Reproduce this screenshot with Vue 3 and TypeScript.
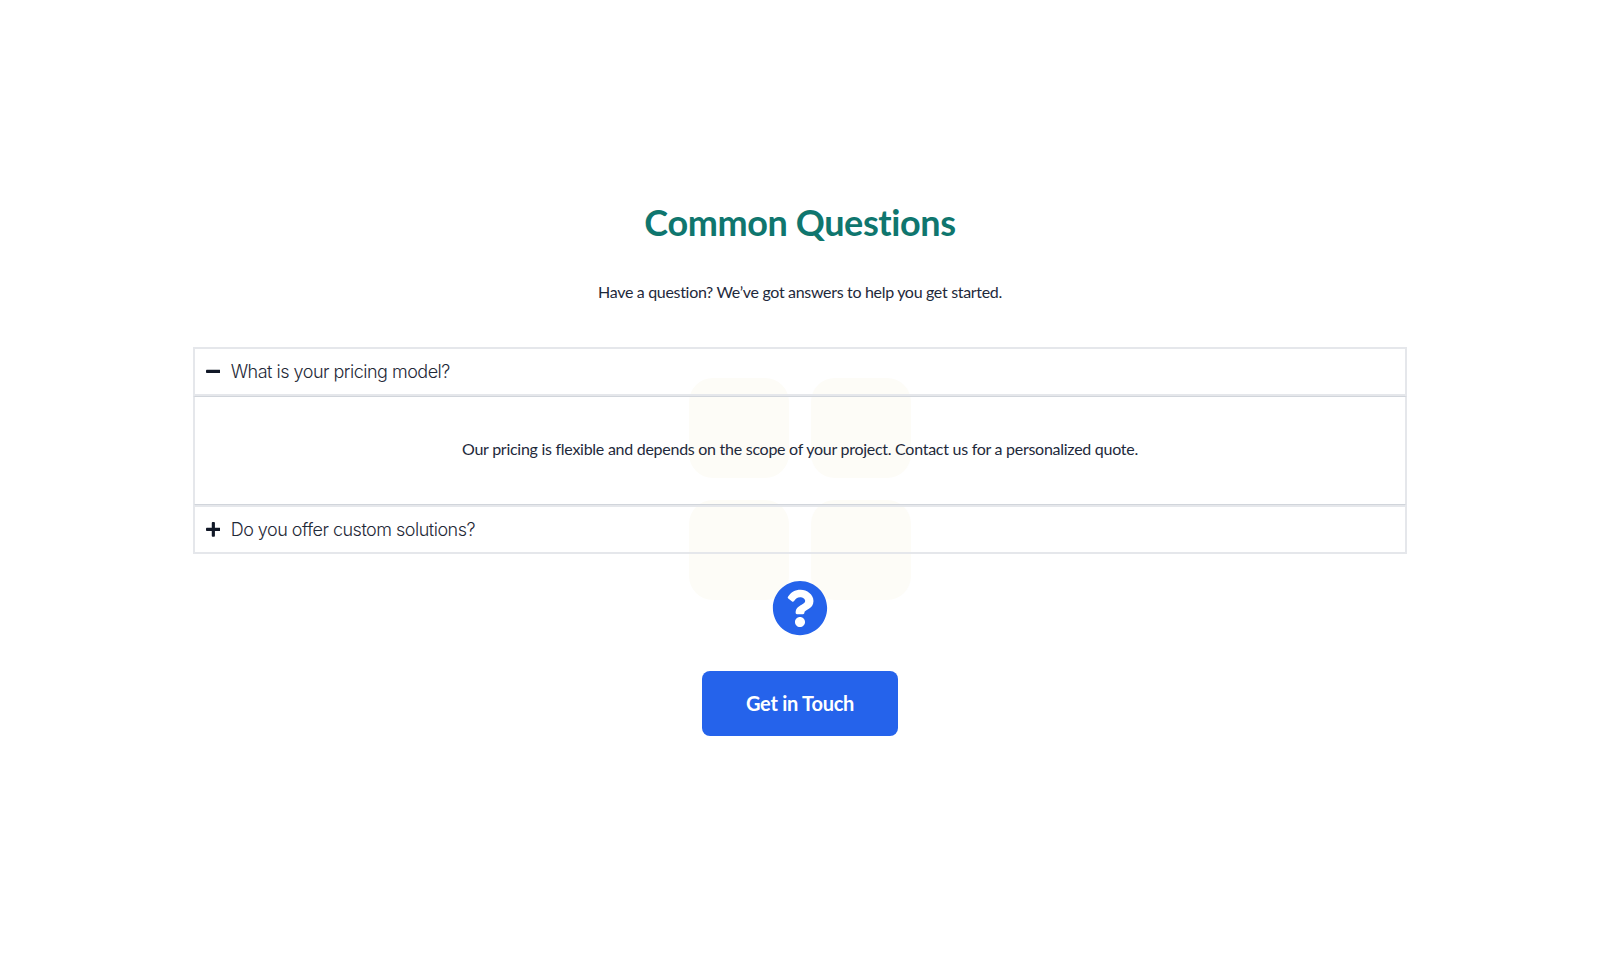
<script setup lang="ts">
import { ref } from 'vue'

interface Faq {
  question: string
  answer: string
}

const faqs: Faq[] = [
  {
    question: 'What is your pricing model?',
    answer: 'Our pricing is flexible and depends on the scope of your project. Contact us for a personalized quote.'
  },
  {
    question: 'Do you offer custom solutions?',
    answer: 'Yes, we tailor our solutions to fit the needs of your business.'
  }
]

const openIndex = ref<number | null>(0)

function toggle(i: number) {
  openIndex.value = openIndex.value === i ? null : i
}
</script>

<template>
  <main class="page">
    <div class="backdrop" aria-hidden="true">
      <span v-for="n in 4" :key="n" class="tile"></span>
    </div>

    <section class="content">
      <h1 class="title">Common Questions</h1>
      <p class="subtitle">Have a question? We’ve got answers to help you get started.</p>

      <div class="faq-list">
        <div v-for="(faq, i) in faqs" :key="faq.question" class="faq-item">
          <button class="faq-head" type="button" @click="toggle(i)">
            <svg class="faq-icon" viewBox="0 0 448 512" aria-hidden="true">
              <path
                v-if="openIndex === i"
                d="M416 208H32c-17.67 0-32 14.33-32 32v32c0 17.67 14.33 32 32 32h384c17.67 0 32-14.33 32-32v-32c0-17.67-14.33-32-32-32z"
              />
              <path
                v-else
                d="M416 208H272V64c0-17.67-14.33-32-32-32h-32c-17.67 0-32 14.33-32 32v144H32c-17.67 0-32 14.33-32 32v32c0 17.67 14.33 32 32 32h144v144c0 17.67 14.33 32 32 32h32c17.67 0 32-14.33 32-32V304h144c17.67 0 32-14.33 32-32v-32c0-17.67-14.33-32-32-32z"
              />
            </svg>
            <span class="faq-question">{{ faq.question }}</span>
          </button>
          <div v-if="openIndex === i" class="faq-body">{{ faq.answer }}</div>
        </div>
      </div>

      <svg class="help-icon" viewBox="0 0 512 512" aria-hidden="true">
        <path
          d="M504 256c0 136.997-111.043 248-248 248S8 392.997 8 256C8 119.083 119.043 8 256 8s248 111.083 248 248zM262.655 90c-54.497 0-89.255 22.957-116.549 63.758-3.536 5.286-2.353 12.415 2.715 16.258l34.699 26.31c5.205 3.947 12.621 3.008 16.665-2.122 17.864-22.658 30.113-35.797 57.303-35.797 20.429 0 45.698 13.148 45.698 32.958 0 14.976-12.363 22.667-32.534 33.976C247.128 238.528 216 254.941 216 296v4c0 6.627 5.373 12 12 12h56c6.627 0 12-5.373 12-12v-1.333c0-28.462 83.186-29.647 83.186-106.667 0-58.002-60.165-102-116.531-102zM256 338c-25.365 0-46 20.635-46 46 0 25.364 20.635 46 46 46s46-20.636 46-46c0-25.365-20.635-46-46-46z"
        />
      </svg>

      <button class="cta" type="button">Get in Touch</button>
    </section>
  </main>
</template>

<style>
html,
body {
  margin: 0;
  background: #fff;
}
</style>

<style scoped>
.page {
  position: relative;
  min-height: 978px;
  box-sizing: border-box;
  padding-top: 202px;
  font-family: 'Lato', 'Liberation Sans', sans-serif;
  color: #1e293b;
  overflow: hidden;
}

/* faint tiles sitting behind the faq */
.backdrop {
  position: absolute;
  left: 689px;
  top: 378px;
  display: grid;
  grid-template-columns: 100px 100px;
  grid-template-rows: 100px 100px;
  gap: 22px;
}

.tile {
  background: #fdfcf7;
  border-radius: 24px;
}

.content {
  position: relative;
  display: flex;
  flex-direction: column;
  align-items: center;
}

.title {
  margin: 0;
  font-size: 36px;
  line-height: 40px;
  font-weight: 700;
  letter-spacing: -0.4px;
  color: #0f766e;
}

.subtitle {
  margin: 38px 0 0;
  font-size: 16px;
  line-height: 24px;
  letter-spacing: -0.32px;
}

.faq-list {
  width: 1214px;
  margin-top: 43px;
}

.faq-item {
  margin-top: -1px;
}

.faq-item:first-child {
  margin-top: 0;
}

.faq-head {
  display: flex;
  align-items: center;
  gap: 10.5px;
  width: 100%;
  height: 49px;
  box-sizing: border-box;
  padding: 0 10.5px;
  background: transparent;
  border: 2px solid #e5e7eb;
  font: inherit;
  cursor: pointer;
}

.faq-icon {
  width: 14.7px;
  height: 16.8px;
  margin-top: -1px;
  fill: #111827;
  flex-shrink: 0;
}

.faq-question {
  font-family: 'Inter', 'Liberation Sans', sans-serif;
  font-size: 18px;
  font-weight: 300;
  letter-spacing: -0.5px;
  color: #1f2937;
}

.faq-body {
  display: flex;
  align-items: center;
  justify-content: center;
  height: 110px;
  box-sizing: border-box;
  padding-bottom: 5px;
  border: 2px solid #e5e7eb;
  border-top: 1px solid #d1d5db;
  border-bottom-color: #d1d5db;
  font-size: 16px;
  letter-spacing: -0.27px;
}

.help-icon {
  width: 56px;
  height: 56px;
  margin-top: 26px;
  fill: #2563eb;
}

.cta {
  width: 196px;
  height: 65px;
  margin-top: 35px;
  padding-bottom: 3px;
  background: #2563eb;
  border: none;
  border-radius: 8px;
  color: #fff;
  font: inherit;
  font-size: 20px;
  font-weight: 700;
  letter-spacing: -0.25px;
  cursor: pointer;
}
</style>
